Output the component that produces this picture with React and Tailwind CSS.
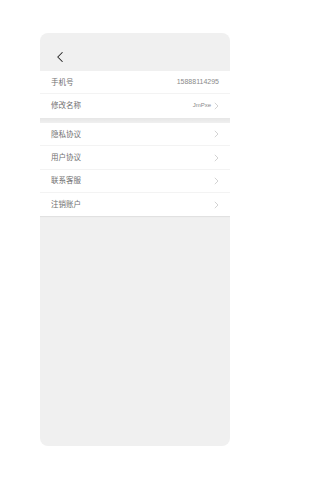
import { ChevronLeft } from 'lucide-react'

function Arrow() {
  return (
    <svg width="5" height="8" viewBox="0 0 5 8" className="ml-[3px]">
      <path d="M0.8 0.8 L4 4 L0.8 7.2" fill="none" stroke="#c8c8c8" strokeWidth="0.8" />
    </svg>
  )
}

function Row({ label, value, arrow, last }) {
  return (
    <div className={`flex items-center justify-between h-[23.3px] px-[11px] bg-white ${last ? '' : 'border-b border-[#f3f3f3]'}`}>
      <span className="text-[7.5px] text-[#707070]">{label}</span>
      <div className="flex items-center">
        {value && <span className={`${arrow ? 'text-[6px]' : 'text-[7px]'} text-[#8a8a8a]`}>{value}</span>}
        {arrow && <Arrow />}
      </div>
    </div>
  )
}

export default function App() {
  return (
    <div className="w-[270px] h-[480px] bg-white pt-[33px] px-[40px]" style={{ fontFamily: '"Liberation Sans", "Noto Sans CJK SC", sans-serif' }}>
      <div className="h-[413px] bg-[#f0f0f0] rounded-[8px] overflow-hidden flex flex-col">
        <div className="h-[38px] flex items-end pb-[5px] pl-[11px]">
          <ChevronLeft size={18} strokeWidth={1.4} color="#222" />
        </div>
        <div className="bg-white">
          <Row label="手机号" value="15888114295" />
          <Row label="修改名称" value="JmPxe" arrow last />
        </div>
        <div className="h-[5.5px] bg-gradient-to-b from-[#e6e6e6] to-[#f0f0f0]" />
        <div className="bg-white shadow-[0_1px_1px_rgba(0,0,0,0.06)]">
          <Row label="隐私协议" arrow />
          <Row label="用户协议" arrow />
          <Row label="联系客服" arrow />
          <Row label="注销账户" arrow last />
        </div>
      </div>
    </div>
  )
}
